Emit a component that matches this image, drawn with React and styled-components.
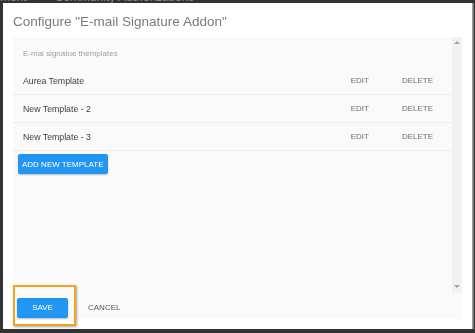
import React from 'react';
import styled, { createGlobalStyle } from 'styled-components';

const GlobalStyle = createGlobalStyle`
  html, body {
    margin: 0;
    padding: 0;
    background: #333333;
    font-family: "Liberation Sans", Arial, sans-serif;
    overflow: hidden;
  }
`;

const TopNav = styled.div`
  display: flex;
  gap: 28px;
  margin-top: -9px;
  font-size: 12px;
  line-height: 12px;
  color: #8a8a8a;
  white-space: nowrap;
`;

const Dialog = styled.div`
  position: fixed;
  top: 3px;
  left: 3px;
  width: 469px;
  height: 326px;
  box-sizing: border-box;
  background: #ffffff;
  box-shadow: 1px 0 0 #9a9a9a, 2px 0 0 #7a7a7a;
  display: flex;
  flex-direction: column;
  padding: 0 10px 10px 10px;
`;

const Title = styled.h2`
  margin: 0;
  height: 34px;
  padding-top: 2px;
  box-sizing: border-box;
  display: flex;
  align-items: center;
  font-size: 13.5px;
  font-weight: 400;
  color: #7a7a7a;
`;

const Panel = styled.div`
  flex: 1;
  background: #fafafa;
  display: flex;
  flex-direction: column;
`;

const ScrollArea = styled.div`
  height: 256px;
  display: flex;
`;

const List = styled.div`
  flex: 1;
  display: flex;
  flex-direction: column;
  align-items: flex-start;
`;

const ListHeader = styled.div`
  align-self: stretch;
  height: 30px;
  padding: 3px 10px 0;
  box-sizing: border-box;
  line-height: 27px;
  font-size: 8px;
  color: #a0a0a0;
`;

const Row = styled.div`
  align-self: stretch;
  height: 28px;
  box-sizing: border-box;
  border-bottom: 1px solid #ededed;
  padding: 0 19px 0 10px;
  display: flex;
  align-items: center;
  font-size: 8.75px;
  color: #3c3c3c;
`;

const RowName = styled.span`
  flex: 1;
`;

const Action = styled.span`
  font-size: 8px;
  color: #6e6e6e;
  text-transform: uppercase;
  margin-left: ${p => p.gap || 0}px;
`;

const Button = styled.button`
  border: none;
  border-radius: 2px;
  background: #2196f3;
  color: #ffffff;
  font-family: "Liberation Sans", Arial, sans-serif;
  font-size: 8px;
  height: 20px;
  padding: 0 ${p => p.pad || 4}px;
  min-width: ${p => p.minWidth || 0}px;
  box-shadow: 0 1px 2px rgba(0, 0, 0, 0.25);
  text-transform: uppercase;
  cursor: pointer;
`;

const AddButton = styled(Button)`
  margin: 3px 0 0 5px;
`;

const Scrollbar = styled.div`
  width: 10px;
  background: #f1f1f1;
  display: flex;
  flex-direction: column;
  justify-content: space-between;
  align-items: center;
  padding: 4px 0 5px;
  box-sizing: border-box;
`;

const Arrow = styled.div`
  width: 0;
  height: 0;
  border-left: 3px solid transparent;
  border-right: 3px solid transparent;
  ${p => (p.down ? 'border-top: 3px solid #a3a3a3;' : 'border-bottom: 3px solid #a3a3a3;')}
`;

const Footer = styled.div`
  flex: 1;
  display: flex;
  align-items: center;
  padding: 3px 0 0 4px;
  gap: 20px;
`;

const Highlight = styled.div`
  position: relative;
  display: flex;
`;

const HighlightBox = styled.div`
  position: absolute;
  left: -4px;
  top: -13px;
  right: -8px;
  bottom: -8px;
  border: 2px solid #f5a31a;
  box-shadow: 1px 1px 2px rgba(0, 0, 0, 0.35);
  pointer-events: none;
`;

const TextButton = styled.button`
  border: none;
  background: transparent;
  font-family: "Liberation Sans", Arial, sans-serif;
  font-size: 8px;
  color: #555555;
  padding: 0;
  text-transform: uppercase;
`;

const templates = ['Aurea Template', 'New Template - 2', 'New Template - 3'];

export default function App() {
  return (
    <>
      <GlobalStyle />
      <TopNav>
        <span>ment</span>
        <span>Community Authorizations</span>
      </TopNav>
      <Dialog>
        <Title>Configure "E-mail Signature Addon"</Title>
        <Panel>
          <ScrollArea>
            <List>
              <ListHeader>E-mai signatue themplates</ListHeader>
              {templates.map(name => (
                <Row key={name}>
                  <RowName>{name}</RowName>
                  <Action>Edit</Action>
                  <Action gap={33}>Delete</Action>
                </Row>
              ))}
              <AddButton>Add new template</AddButton>
            </List>
            <Scrollbar>
              <Arrow />
              <Arrow down />
            </Scrollbar>
          </ScrollArea>
          <Footer>
            <Highlight>
              <Button minWidth={51}>Save</Button>
              <HighlightBox />
            </Highlight>
            <TextButton>Cancel</TextButton>
          </Footer>
        </Panel>
      </Dialog>
    </>
  );
}
